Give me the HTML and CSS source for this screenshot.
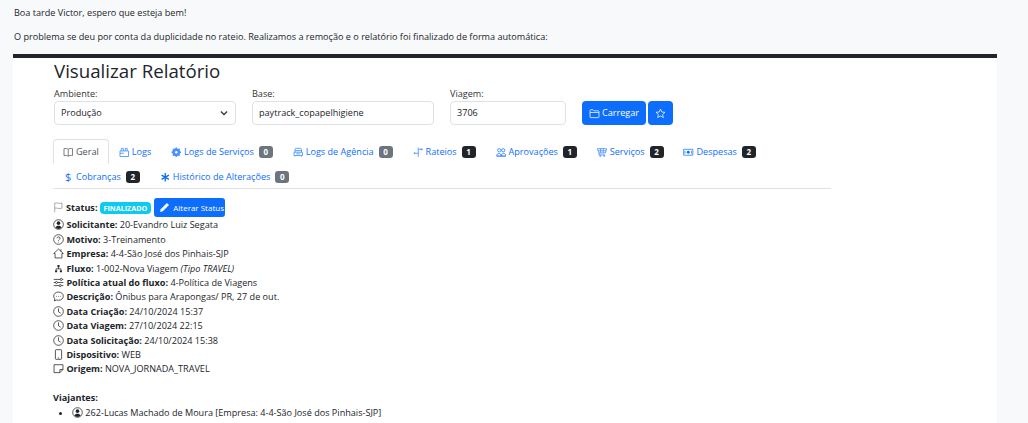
FILE: index.html
```html
<!DOCTYPE html>
<html lang="en">
<head>
    <meta charset="UTF-8">
    <title>Visualizar Relatório</title>
    <link rel="stylesheet" href="styles.css">
</head>
<body>
    <p class="msg">Boa tarde Victor, espero que esteja bem!</p>
    <p class="msg">O problema se deu por conta da duplicidade no rateio. Realizamos a remoção e o relatório foi finalizado de forma automática:</p>

    <div class="panel">
        <div class="content">
            <h1>Visualizar Relatório</h1>

            <form class="filters">
                <div class="field field-wide">
                    <label>Ambiente:</label>
                    <div class="control select">Produção
                        <svg class="chevron" viewBox="0 0 16 16"><path d="M3 5.500l5 5 5-5"/></svg>
                    </div>
                </div>
                <div class="field field-wide">
                    <label>Base:</label>
                    <div class="control">paytrack_copapelhigiene</div>
                </div>
                <div class="field field-small">
                    <label>Viagem:</label>
                    <div class="control">3706</div>
                </div>
                <div class="actions">
                    <button type="button" class="btn">
                        <svg class="ico" viewBox="0 0 16 16"><path d="M1.500 13V3.500a1 1 0 0 1 1-1h3.300l1.400 1.600h6.300a1 1 0 0 1 1 1V13a1 1 0 0 1-1 1h-11a1 1 0 0 1-1-1zM1.500 6.500h13"/></svg>
                        Carregar
                    </button>
                    <button type="button" class="btn btn-star">
                        <svg class="ico" viewBox="0 0 16 16"><path d="M8 1.600l1.900 4.200 4.600.5-3.400 3.100 1 4.500L8 11.600l-4.100 2.300 1-4.500L1.500 6.300l4.600-.5z"/></svg>
                    </button>
                </div>
            </form>

            <ul class="tabs">
                <li class="tab active"><svg class="ico" viewBox="0 0 16 16"><path d="M8 3.500C6.500 2.300 4 2 1.500 2.500v10.500C4 12.500 6.500 12.800 8 14c1.500-1.200 4-1.500 6.500-1V2.500C12 2 9.500 2.300 8 3.500zM8 3.500V14"/></svg> Geral</li>
                <li class="tab"><svg class="ico ico-soft" viewBox="0 0 16 16"><path d="M1.500 6h13v8.500h-13zM3.500 6V2h3v4M9.500 6V2h3v4M1.500 9.500h6"/></svg> Logs</li>
                <li class="tab"><svg class="ico ico-gear" viewBox="0 0 16 16"><circle cx="8" cy="8" r="5"/><path d="M8 .8v14.400M.8 8h14.400M2.900 2.900l10.200 10.200M13.100 2.900L2.900 13.100"/><circle cx="8" cy="8" r="1.800" class="hole"/></svg> Logs de Serviços <span class="badge badge-gray">0</span></li>
                <li class="tab"><svg class="ico ico-soft" viewBox="0 0 16 16"><path d="M3 8V4a2 2 0 0 1 2-2h6a2 2 0 0 1 2 2v4M1.500 8h13v5h-13zM3 13v1.500M13 13v1.500M3 5.500h10M5 10.500h6"/></svg> Logs de Agência <span class="badge badge-gray">0</span></li>
                <li class="tab"><svg class="ico ico-soft" viewBox="0 0 16 16"><path d="M8 1v14M8 3.500h7M1 9.500h7M2.500 8v3M13 2v3"/></svg> Rateios <span class="badge">1</span></li>
                <li class="tab"><svg class="ico" viewBox="0 0 16 16"><circle cx="5" cy="5" r="2.500"/><circle cx="11" cy="5" r="2.500"/><path d="M1 13.500c0-5 7-5 7 0zM8 13.500c0-5 7-5 7 0zM1 15h14"/></svg> Aprovações <span class="badge">1</span></li>
                <li class="tab"><svg class="ico ico-soft" viewBox="0 0 16 16"><path d="M.5 2.500h14l-1.500 6.500H3zM5.500 2.500v6.500M9.500 2.500v6.500M2 5.800h11.800M3 9v3h9"/><circle cx="5" cy="13.500" r="1"/><circle cx="11" cy="13.500" r="1"/></svg> Serviços <span class="badge">2</span></li>
                <li class="tab"><svg class="ico" viewBox="0 0 16 16"><path d="M1 3.500h14v9H1z"/><circle cx="8" cy="8" r="2.200" class="dot"/><path d="M3 6v4M13 6v4"/></svg> Despesas <span class="badge">2</span></li>
                <li class="tab"><span class="dollar">$</span> Cobranças <span class="badge">2</span></li>
                <li class="tab"><svg class="ico ico-bold" viewBox="0 0 16 16"><path d="M8 1.500v13M2.400 4.700l11.200 6.600M13.600 4.700L2.400 11.300"/></svg> Histórico de Alterações <span class="badge badge-gray">0</span></li>
            </ul>

            <div class="details">
                <div class="status-row">
                    <svg class="ico ico-flag" viewBox="0 0 16 16"><path d="M2.500 15V1.500c3-1 5 1.500 10.500 0v7.500c-5 1.500-7.500-1-10.500 0"/></svg>
                    <b>Status:</b>
                    <span class="pill">FINALIZADO</span>
                    <button type="button" class="btn-status">
                        <svg class="ico ico-solid" viewBox="0 0 16 16"><path d="M11.500 1.500l3 3L5.500 13.500l-4 1 1-4z"/></svg>
                        Alterar Status
                    </button>
                </div>
                <div class="row"><svg class="ico" viewBox="0 0 16 16"><circle cx="8" cy="8" r="7"/><circle cx="8" cy="6" r="2.600" class="dot"/><path class="dot" d="M3.500 12.500c1.500-3.500 7.500-3.500 9 0-2 2.500-7 2.500-9 0z"/></svg> <b>Solicitante:</b> 20-Evandro Luiz Segata</div>
                <div class="row"><svg class="ico" viewBox="0 0 16 16"><circle cx="8" cy="8" r="7"/><path d="M5.800 6.200C6 3.500 10.300 3.700 10.300 6.200c0 1.800-2.300 1.800-2.300 3.500M8 11.300v1"/></svg> <b>Motivo:</b> 3-Treinamento</div>
                <div class="row"><svg class="ico" viewBox="0 0 16 16"><path d="M8 1.500L1 8h2v6.500h10V8h2zM11.500 2v3"/></svg> <b>Empresa:</b> 4-4-São José dos Pinhais-SJP</div>
                <div class="row"><svg class="ico ico-solid" viewBox="0 0 16 16"><path d="M6.500 3h3v3h-3zM3 10.500h3v3H3zM10 10.500h3v3h-3zM7.500 6h1v2h3.500v2h-1v-1H5v1H4V8h3.500z"/></svg> <b>Fluxo:</b> 1-002-Nova Viagem <i>(Tipo TRAVEL)</i></div>
                <div class="row"><svg class="ico" viewBox="0 0 16 16"><path d="M1 3.500h9.500M13.500 3.500H15M1 8h2.500M6.500 8H15M1 12.500h8M12 12.500h3"/><circle cx="12" cy="3.500" r="1.500"/><circle cx="5" cy="8" r="1.500"/><circle cx="10.500" cy="12.500" r="1.500"/></svg> <b>Política atual do fluxo:</b> 4-Política de Viagens</div>
                <div class="row"><svg class="ico" viewBox="0 0 16 16"><path d="M8 1.500c-4 0-7 2.700-7 6 0 1.500.6 2.800 1.600 3.800L2 14.500l3.300-1.500c.8.300 1.800.5 2.700.5 4 0 7-2.700 7-6s-3-6-7-6zM5 7.200v1M8 7.200v1M11 7.200v1"/></svg> <b>Descrição:</b> Ônibus para Arapongas/ PR, 27 de out.</div>
                <div class="row"><svg class="ico" viewBox="0 0 16 16"><circle cx="8" cy="8" r="7"/><path d="M8 3.500V8.500l3.200 2"/></svg> <b>Data Criação:</b> 24/10/2024 15:37</div>
                <div class="row"><svg class="ico" viewBox="0 0 16 16"><circle cx="8" cy="8" r="7"/><path d="M8 3.500V8.500l3.200 2"/></svg> <b>Data Viagem:</b> 27/10/2024 22:15</div>
                <div class="row"><svg class="ico" viewBox="0 0 16 16"><circle cx="8" cy="8" r="7"/><path d="M8 3.500V8.500l3.200 2"/></svg> <b>Data Solicitação:</b> 24/10/2024 15:38</div>
                <div class="row"><svg class="ico" viewBox="0 0 16 16"><path d="M4.500 1h7a1 1 0 0 1 1 1v12a1 1 0 0 1-1 1h-7a1 1 0 0 1-1-1V2a1 1 0 0 1 1-1zM7 13h2"/></svg> <b>Dispositivo:</b> WEB</div>
                <div class="row"><svg class="ico" viewBox="0 0 16 16"><path d="M1.500 2.500h13v7L10 14H1.500zM14.500 9.500H10V14"/></svg> <b>Origem:</b> NOVA_JORNADA_TRAVEL</div>

                <div class="travelers-title"><b>Viajantes:</b></div>
                <ul class="travelers">
                    <li><svg class="ico" viewBox="0 0 16 16"><circle cx="8" cy="8" r="7"/><circle cx="8" cy="6" r="2.600" class="dot"/><path class="dot" d="M3.500 12.500c1.500-3.500 7.500-3.500 9 0-2 2.500-7 2.500-9 0z"/></svg> 262-Lucas Machado de Moura [Empresa: 4-4-São José dos Pinhais-SJP]</li>
                </ul>
            </div>
        </div>
    </div>
</body>
</html>
```
FILE: styles.css
```css
* {
    box-sizing: border-box;
}

html, body {
    height: 423px;
    overflow: hidden;
}

body {
    margin: 0;
    padding: 6px 0 0 14px;
    background: #f8f9fa;
    color: #212529;
    font-family: 'Open Sans', 'Noto Sans', sans-serif;
    font-size: 9.1px;
    line-height: 14.4px;
}

.msg {
    margin: 0 0 9.6px;
}

.panel {
    width: 984px;
    height: 369px;
    margin: 10px 0 0 -1px;
    padding-left: 41px;
    overflow: hidden;
    background: #fff;
    border-top: 4px solid #212529;
}

.content {
    width: 777px;
}

h1 {
    margin: 0;
    font-size: 18.7px;
    font-weight: 500;
    line-height: 26px;
}

.filters {
    display: flex;
    align-items: flex-end;
    gap: 16px;
    margin-top: 3px;
}

.field label {
    display: block;
    margin-bottom: 1px;
    line-height: 13px;
    color: #333;
}

.field-wide {
    width: 182px;
}

.field-small {
    width: 116px;
}

.control {
    display: flex;
    align-items: center;
    justify-content: space-between;
    height: 24px;
    padding: 0 6px;
    background: #fff;
    border: 1px solid #dee2e6;
    border-radius: 4px;
}

.chevron {
    width: 10px;
    height: 10px;
    fill: none;
    stroke: #343a40;
    stroke-width: 2;
}

.actions {
    display: flex;
    gap: 2px;
}

.btn {
    display: flex;
    align-items: center;
    justify-content: center;
    gap: 2px;
    width: 64px;
    height: 24px;
    padding: 0;
    background: #0d6efd;
    color: #fff;
    border: 0;
    border-radius: 4px;
    font: inherit;
}

.btn-star {
    width: 25px;
}

.ico {
    flex: none;
    width: 11px;
    height: 11px;
    vertical-align: -2px;
    fill: none;
    stroke: currentColor;
    stroke-width: 1.1;
}

.ico-soft {
    stroke-width: 1.3;
    opacity: 0.75;
}

.ico-gear {
    fill: currentColor;
    stroke-width: 2;
    opacity: 0.75;
}

.hole {
    fill: #fff;
    stroke: none;
}

.ico-bold {
    stroke-width: 2;
}

.ico-solid {
    fill: currentColor;
    stroke: none;
}

.ico-flag {
    color: #8a9199;
}

.dot {
    fill: currentColor;
    stroke: none;
}

.tabs {
    display: flex;
    flex-wrap: wrap;
    align-content: flex-start;
    height: 50px;
    margin: 14px 0 0 -1px;
    padding: 0;
    list-style: none;
    border-bottom: 1px solid #dee2e6;
}

.tab {
    display: flex;
    align-items: center;
    gap: 2.5px;
    height: 25px;
    padding: 0 9.95px;
    color: #0d6efd;
    white-space: nowrap;
}

.tab .ico {
    width: 10.5px;
    height: 10.5px;
}

.tab.active {
    padding: 0 9px;
    color: #495057;
    background: #fff;
    border: 1px solid #dee2e6;
    border-bottom-color: #fff;
    border-radius: 4px 4px 0 0;
}

.dollar {
    width: 10.5px;
    font-size: 11px;
    text-align: center;
}

.badge {
    display: inline-block;
    min-width: 14px;
    height: 12px;
    margin-left: 2.5px;
    padding: 0 4px;
    background: #212529;
    color: #fff;
    border-radius: 3px;
    font-size: 8px;
    font-weight: 700;
    line-height: 12px;
    text-align: center;
}

.badge-gray {
    background: #6c757d;
}

.details {
    margin-left: -1px;
    padding-top: 9px;
}

.status-row {
    display: flex;
    align-items: center;
    gap: 2px;
    height: 19px;
    margin-bottom: 1px;
}

.pill {
    height: 12px;
    padding: 0 4px;
    background: #0dcaf0;
    color: #fff;
    border-radius: 4px;
    font-size: 7.2px;
    font-weight: 700;
    line-height: 12px;
}

.btn-status {
    display: flex;
    align-items: center;
    gap: 3px;
    width: 71px;
    height: 19px;
    margin-left: 1px;
    padding: 0 0 0 5px;
    background: #0d6efd;
    color: #fff;
    border: 0;
    border-radius: 3px;
    font: inherit;
    font-size: 8px;
    white-space: nowrap;
}

.row {
    height: 14.4px;
}

.travelers-title {
    margin-top: 14.4px;
}

.travelers {
    margin: 0;
    padding-left: 19px;
}
```
